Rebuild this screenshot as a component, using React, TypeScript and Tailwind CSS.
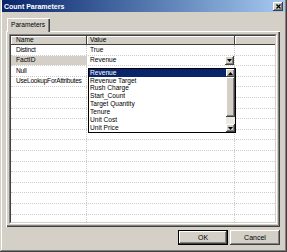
import { FC } from "react";

const rows = ["Distinct", "FactID", "Null", "UseLookupForAttributes"];
const values: Record<string, string> = { Distinct: "True", Null: "", UseLookupForAttributes: "" };
const items = [
  "Revenue",
  "Revenue Target",
  "Rush Charge",
  "Start_Count",
  "Target Quantity",
  "Tenure",
  "Unit Cost",
  "Unit Price",
];

const DownArrow: FC = () => (
  <svg width="5" height="3" viewBox="0 0 5 3">
    <polygon points="0,0 5,0 2.5,3" fill="#000" />
  </svg>
);

const UpArrow: FC = () => (
  <svg width="5" height="3" viewBox="0 0 5 3">
    <polygon points="0,3 5,3 2.5,0" fill="#000" />
  </svg>
);

export default function App() {
  return (
    <div className="relative flex h-[252px] w-[287px] flex-col overflow-hidden bg-[#d4d0c8] font-['Liberation_Sans',Arial,sans-serif] text-[6.6px] leading-none text-black shadow-[inset_-1px_-1px_#404040,inset_1px_0_#d4d0c8,inset_-2px_-2px_#808080,inset_2px_0_#ffffff]">
      {/* title bar */}
      <div className="mx-[2px] flex h-[12px] shrink-0 items-center justify-between bg-gradient-to-r from-[#0a246a] to-[#a6caf0] pl-[2px] pr-[2px]">
        <span className="text-[7px] font-bold text-white">Count Parameters</span>
        <div className="flex h-[9px] w-[10px] items-center justify-center bg-[#d4d0c8] shadow-[inset_-1px_-1px_#404040,inset_1px_1px_#ffffff,inset_-2px_-2px_#808080]">
          <svg width="5" height="5" viewBox="0 0 5 5">
            <path d="M0.5 0.5 L4.5 4.5 M4.5 0.5 L0.5 4.5" stroke="#000" strokeWidth="1.3" />
          </svg>
        </div>
      </div>

      {/* tab strip */}
      <div className="ml-[7px] mt-[6px] flex h-[13px] shrink-0">
        <div className="relative z-10 flex h-[14px] w-[43px] items-center rounded-t-[1px] border-l border-t border-white bg-[#d4d0c8] pl-[3px] shadow-[inset_-1px_0_#404040,inset_-2px_0_#808080]">
          Parameters
        </div>
      </div>

      {/* tab panel */}
      <div className="ml-[6px] mr-[7px] h-[196px] shrink-0 border-l border-t border-white pb-[3px] pl-[2px] pr-[3px] pt-[2px] shadow-[inset_-1px_-1px_#404040,inset_-2px_-2px_#808080]">
        <div className="h-full w-full border border-b-white border-l-[#808080] border-r-white border-t-[#808080]">
          <div className="relative h-full w-full overflow-hidden border border-b-[#d4d0c8] border-l-[#404040] border-r-[#d4d0c8] border-t-[#404040] bg-white">
            {/* header */}
            <div className="flex h-[9px]">
              <div className="flex w-[76px] items-center bg-[#d4d0c8] pl-[5px] shadow-[inset_-1px_-1px_#404040,inset_1px_1px_#ffffff]">
                Name
              </div>
              <div className="flex w-[148px] items-center bg-[#d4d0c8] pl-[3px] shadow-[inset_-1px_-1px_#404040,inset_1px_1px_#ffffff]">
                Value
              </div>
              <div className="flex-1 bg-[#d4d0c8] shadow-[inset_0_-1px_#404040,inset_1px_1px_#ffffff]" />
            </div>

            {/* rows */}
            {Array.from({ length: 17 }).map((_, i) => {
              const name = rows[i] ?? "";
              const isFact = name === "FactID";
              return (
                <div key={i} className="flex h-[10.6px] border-b border-dotted border-[#d0cccc]">
                  <div
                    className={
                      isFact
                        ? "flex w-[76px] items-center overflow-hidden whitespace-nowrap border-r border-dotted border-[#d0cccc] bg-[#d4d0c8] pl-[5px]"
                        : "flex w-[76px] items-center overflow-hidden whitespace-nowrap border-r border-dotted border-[#d0cccc] pl-[5px] tracking-[-0.25px]"
                    }
                  >
                    {name}
                  </div>
                  <div className="flex w-[148px] items-center border-r border-dotted border-[#d0cccc] pl-[3px]">
                    {isFact ? (
                      <div className="flex h-full w-full items-center justify-between">
                        <span>Revenue</span>
                        <div className="flex h-[9px] w-[9px] items-center justify-center bg-[#d4d0c8] shadow-[inset_-1px_-1px_#404040,inset_1px_1px_#ffffff,inset_-2px_-2px_#808080]">
                          <DownArrow />
                        </div>
                      </div>
                    ) : (
                      values[name] ?? ""
                    )}
                  </div>
                  <div className="flex-1" />
                </div>
              );
            })}

            {/* open dropdown list */}
            <div className="absolute left-[77px] top-[32px] flex h-[65px] w-[148px] border border-black bg-white">
              <div className="flex flex-1 flex-col">
                {items.map((it, i) => (
                  <div
                    key={it}
                    className={
                      i === 0
                        ? "flex h-[8px] items-center bg-[#0a246a] pl-[1px] text-white"
                        : "flex h-[8px] items-center pl-[1px]"
                    }
                  >
                    {it}
                  </div>
                ))}
              </div>
              <div className="flex w-[9px] flex-col bg-[#ebe9e4]">
                <div className="flex h-[8px] items-center justify-center bg-[#d4d0c8] shadow-[inset_-1px_-1px_#404040,inset_1px_1px_#ffffff,inset_-2px_-2px_#808080]">
                  <UpArrow />
                </div>
                <div className="h-[40px] bg-[#d4d0c8] shadow-[inset_-1px_-1px_#404040,inset_1px_1px_#ffffff,inset_-2px_-2px_#808080]" />
                <div className="flex-1" />
                <div className="flex h-[8px] items-center justify-center bg-[#d4d0c8] shadow-[inset_-1px_-1px_#404040,inset_1px_1px_#ffffff,inset_-2px_-2px_#808080]">
                  <DownArrow />
                </div>
              </div>
            </div>
          </div>
        </div>
      </div>

      {/* buttons */}
      <div className="mr-[7px] mt-[3px] flex h-[15px] shrink-0 justify-end gap-[2px]">
        <button className="flex h-[15px] w-[50px] items-center justify-center border border-black bg-[#d4d0c8] text-[7px] shadow-[inset_-1px_-1px_#404040,inset_1px_1px_#ffffff,inset_-2px_-2px_#808080]">
          OK
        </button>
        <button className="flex h-[15px] w-[50px] items-center justify-center bg-[#d4d0c8] text-[7px] shadow-[inset_-1px_-1px_#404040,inset_1px_1px_#ffffff,inset_-2px_-2px_#808080]">
          Cancel
        </button>
      </div>
    </div>
  );
}
